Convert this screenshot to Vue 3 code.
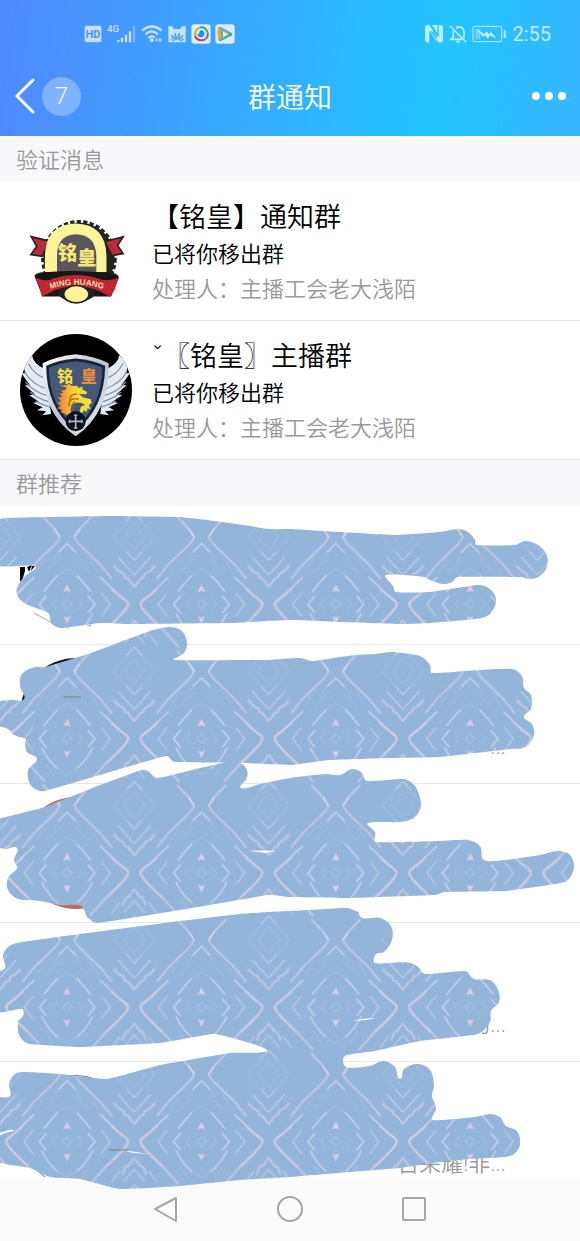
<template>
  <div class="phone">
    <header class="header">
      <div class="status">
        <div class="status_side">
          <svg class="icon_app" viewBox="0 0 60 60">
            <rect x="5" y="5" width="50" height="50" rx="6" fill="#fff" opacity=".7" />
            <text x="30" y="42" text-anchor="middle" class="hd_text">HD</text>
          </svg>
          <svg class="icon_signal" viewBox="0 0 90 60">
            <text x="0" y="24" class="net_text">4G</text>
            <path d="M34 48v7M45 41v14M57 32v23M69 22v33" class="line_bar" />
            <path d="M81 5v50" class="line_bar faint" />
          </svg>
          <svg class="icon_wifi" viewBox="0 0 66 60">
            <path d="M3 20Q32-5 62 20M13 31Q32 14 51 31M22 42Q32 33 42 41" class="line wide" />
            <circle cx="32" cy="49" r="6" class="solid" />
            <path d="M50 41l-8 7 8 7zM54 41l9 7-9 7z" class="solid" />
          </svg>
          <svg class="icon_app" viewBox="0 0 60 60">
            <path d="M4 7h12l5 8h18l5-8h12v48H4z" class="solid" />
            <g fill="#4a9dfd">
              <ellipse cx="26" cy="37" rx="3" ry="11" transform="rotate(-12 26 37)" />
              <ellipse cx="35" cy="37" rx="3" ry="11" transform="rotate(12 35 37)" />
              <ellipse cx="19" cy="41" rx="3" ry="10" transform="rotate(-38 19 41)" />
              <ellipse cx="42" cy="41" rx="3" ry="10" transform="rotate(38 42 41)" />
              <ellipse cx="16" cy="48" rx="2" ry="7" transform="rotate(-65 16 48)" />
              <ellipse cx="45" cy="48" rx="2" ry="7" transform="rotate(65 45 48)" />
            </g>
          </svg>
          <svg class="icon_app" viewBox="0 0 60 60">
            <rect x="1" y="1" width="58" height="58" rx="9" fill="#d8edff" />
            <g fill="none" stroke-width="6">
              <path d="M13 37Q8 17 27 10" stroke="#d5a73a" />
              <path d="M27 10Q44 9 49 24" stroke="#39a968" />
              <path d="M50 25Q52 40 43 45" stroke="#6b74a6" />
              <path d="M12 37Q22 55 43 46" stroke="#d03052" />
            </g>
            <path d="M30 18a11 11 0 1 1-9 18l-3-6 6-1q-1-8 6-11z" fill="#2693da" />
          </svg>
          <svg class="icon_app" viewBox="0 0 60 60">
            <rect x="1" y="1" width="58" height="58" rx="9" fill="#d8edff" />
            <path d="M9 12q2-5 9-2l31 16q7 4 0 9L19 50q-8 4-9-4-3-17-1-34z" fill="#4197e5" />
            <path d="M8 16q2-7 9-3l25 13-22 20q-9 4-11-6z" fill="#e8a260" />
            <path d="M17 14l29 16-28 18z" fill="#67bd62" />
            <path d="M24 22l16 9-16 9z" fill="#e4f4ed" />
          </svg>
        </div>
        <div class="status_side">
          <svg class="icon_app" viewBox="0 0 60 60">
            <path d="M12 3Q3 3 3 13v33q0 10 9 10h4V19l22 34V39L16 3zM48 3q9 0 9 10v33q0 10-9 10h-4L22 24v-4l22 20V3zM24 3h16v25z" class="solid" />
          </svg>
          <svg class="icon_app" viewBox="0 0 60 60">
            <path d="M6 6l48 48M16 20v18l-7 8h34M24 13q20-11 24 10v19M28 5v6M25 53h10" class="line" />
          </svg>
          <svg class="icon_battery" viewBox="0 0 102 60">
            <rect x="3" y="7" width="86" height="46" rx="6" class="line thin" />
            <path d="M10 14h15v32H10z" class="solid faint" />
            <path d="M15 17l23 13 4-8 11 9 3-9 17 20-20-7-5 9-10-10-4 6z" class="solid" />
            <path d="M95 19h6v23h-6z" class="solid" />
          </svg>
          <span class="time">2:55</span>
        </div>
      </div>
      <div class="bar">
        <div class="bar_side">
          <button class="back" aria-label="返回">
            <svg class="icon_back" viewBox="0 0 22 38"><path d="M19 3L3 19l16 16" /></svg>
            <span class="count">7</span>
          </button>
        </div>
        <h1 class="bar_title">群通知</h1>
        <div class="bar_side bar_end">
          <button class="more" aria-label="更多">
            <i class="dot"></i><i class="dot"></i><i class="dot"></i>
          </button>
        </div>
      </div>
    </header>

    <h2 class="section_title">验证消息</h2>
    <ul class="list">
      <li v-for="item in notices" :key="item.name" class="row">
        <svg v-if="item.badge === 'seal'" class="avatar" viewBox="57 40 342 342">
          <ellipse cx="237" cy="234" rx="109" ry="110" fill="#252321" />
          <ellipse cx="237" cy="234" rx="111" ry="113" fill="none" stroke="#252321" stroke-width="9" stroke-dasharray="13 7" />
          <g stroke="#222" stroke-width="5">
            <path d="M91 167l54 13-20 47-35-5 18-25z" fill="#b92b36" />
            <path d="M372 168l-56 14 22 43 34-6-17-25z" fill="#b92b36" />
          </g>
          <path d="M133 275V226Q135 129 227 127q92 2 94 99v49z" fill="#fcf39a" />
          <path d="M170 275v-50q2-64 58-65 59 1 62 65v50z" fill="#59555a" />
          <text x="173" y="240" class="seal_text">铭</text>
          <text x="232" y="254" class="seal_text">皇</text>
          <path d="M101 287q6-14 45-12 82-7 172 3 38-3 41 14l-24 58H126z" fill="#171717" />
          <ellipse cx="230" cy="338" rx="57" ry="28" fill="#222" />
          <path d="M102 291q34 17 56 4 73-22 144 2 28 8 57-5-8 20-12 36l-16 23q-101-67-207 0l-9-35z" fill="#c02632" />
          <ellipse cx="229" cy="343" rx="42" ry="29" fill="#222" />
          <ellipse cx="229" cy="343" rx="36" ry="24" fill="#fcf39a" />
          <path id="seal_arc" d="M137 332Q229 296 324 332" fill="none" />
          <text class="ribbon_text"><textPath href="#seal_arc" startOffset="50%" text-anchor="middle">MING HUANG</textPath></text>
        </svg>
        <svg v-else class="avatar round" viewBox="57 38 342 342">
          <defs>
            <linearGradient id="silver" x2="1" y2="1">
              <stop offset="0" stop-color="#fff" />
              <stop offset=".5" stop-color="#bcc3ce" />
              <stop offset="1" stop-color="#f2f4f7" />
            </linearGradient>
            <linearGradient id="gold" x2="1">
              <stop offset="0" stop-color="#ee773b" />
              <stop offset=".5" stop-color="#f8d52f" />
              <stop offset="1" stop-color="#f3e438" />
            </linearGradient>
          </defs>
          <path d="M57 38h342v342H57z" fill="#000" />
          <g id="wing">
            <path d="M94 103q2 24 38 42l20 137-27 4 12-12-28-3 17-9-29-13 18-4-30-20 18-2-32-29 17 1-29-40 16 4q-17-28 19-56z" fill="#e4eaf1" />
            <path d="M83 129q18 35 53 45M71 154q21 36 67 52M74 184q24 31 69 43M88 215q22 20 58 30M105 243q17 10 44 18" class="feather" />
          </g>
          <use href="#wing" transform="matrix(-1 0 0 1 454 0)" />
          <path d="M227 100q58 6 101 27 3 151-101 223-105-71-101-223 44-21 101-27z" fill="url(#silver)" />
          <path d="M227 113q52 5 90 22-1 130-90 198-90-68-90-198 39-17 90-22z" fill="#16243a" />
          <path d="M227 121q47 4 82 20-3 119-82 180-81-62-82-180 35-16 82-20z" fill="#465877" />
          <text x="171" y="185" class="shield_text">铭</text>
          <text x="243" y="185" class="shield_text orange">皇</text>
          <path d="M181 210q17 2 18-9-14-2-21-7 21 4 28-4 10 10 25 5l5 8 13-5-2 9 15 8-2 7-24-1 15 11 22 5 3 11-9 7 6 13-10-3-3 12-7-7-8 12-6-10 4-12 13-6q-26-14-39 1-16 21 13 30-33 3-38-5l-12-3 7-7-16-5 11-8-11-8 12-6-11-12 14-1-8-11 12-1z" fill="url(#gold)" />
          <path d="M207 260q-4-29 30-23M209 239q3-19 22-17M218 271q-8-15 7-27" class="scale" />
          <circle cx="227" cy="304" r="31" fill="#0c1320" />
          <path d="M227 285v41M207 305h40M222 286h10M222 325h10M208 300v10M246 300v10" class="cross" />
        </svg>
        <div class="info">
          <h3 class="name">{{ item.name }}</h3>
          <p class="result">已将你移出群</p>
          <p class="note">处理人：主播工会老大浅陌</p>
        </div>
      </li>
    </ul>

    <h2 class="section_title">群推荐</h2>
    <section class="recommend">
      <ul class="list recommend_list">
        <li v-for="(item, i) in groups" :key="i" class="row">
          <svg class="avatar" :class="item.tone" viewBox="0 0 112 112">
            <g v-if="item.tone === 'sketch'">
              <path d="M0 48h5v4l-3 10H0zM7 48l5-2-3 7zM12 47h3l-4 5z" fill="#080808" />
              <path d="M14 94l20 11M48 106v4M69 101l2 6-4-1" fill="none" stroke="#aaa" />
            </g>
          </svg>
          <div class="info_end">
            <p class="note">{{ item.note }}</p>
          </div>
        </li>
      </ul>
      <svg class="scribble" viewBox="0 506 580 684" aria-hidden="true">
        <defs>
          <pattern id="weave" width="403" height="403" patternUnits="userSpaceOnUse" patternTransform="translate(0 537) scale(.3333)">
            <path d="M0 0h403v403H0z" fill="#94b5da" />
            <g v-for="flip in flips" :key="flip" :transform="flip">
              <path d="M223-2q3 12 19 28l58 56 36 44M275 341l-36 38-17 26" class="w4" />
              <path d="M240 379l-17 24M300 120l38 36" class="w3" />
              <path d="M334 154q24 23 44 37 10 8 4 18-7 15-62 66" class="w5" />
              <path d="M323 271l-54 60" class="w4" />
              <path d="M201 19l27 27M230 115q20 20 42 49M278 229q-18 38-48 63M264 177l21 25-21 26" class="w3" />
              <path d="M304 168l27 34-27 36" class="w2" />
              <path d="M201 95l30 20M230 292l-29 18M222 62l44 44M268 65l25 38M217 32l27 38M233 184l14 18-14 18M265 277l-24 38M201 187l14 15-14 15-14-15z" class="w1" />
              <path d="M403 331l-62 72M341 0l62 70M403 363l-31 40M372 0l31 40M335 74l68 75M356 60l28 33" class="w1" />
              <path d="M403 331l-24 24M380 44l23 26M354 60l49 54M403 285l-31 36M360 290l-26 33" class="w2" />
              <path d="M341 87l14 15 17 9 3 11 9 2 19 26" class="w4" />
              <path d="M403 250l-17 24-9 3-10 24" class="w4" />
              <path d="M201 142l12 23-12-4zM201 261l11-23-11 4z" fill="#dfcde1" />
            </g>
          </pattern>
        </defs>
        <path v-for="(shape, i) in shapes" :key="i" :d="outline(shape)" fill="url(#weave)" />
        <path d="M249 851q14-1 27 0l-10 2zM352 1021q13-3 24-3l-10 2zM122 1150l28 4-17-1z" fill="#fff" />
        <path d="M63 697h18M109 1150h19" class="trace" />
      </svg>
    </section>

    <nav class="system">
      <button class="system_btn" aria-label="返回">
        <svg viewBox="0 0 30 30"><path d="M25 4v23L4 15z" /></svg>
      </button>
      <button class="system_btn" aria-label="主页">
        <svg viewBox="0 0 30 30"><circle cx="15" cy="15" r="12" /></svg>
      </button>
      <button class="system_btn" aria-label="最近任务">
        <svg viewBox="0 0 30 30"><rect x="4" y="4" width="22" height="22" rx="1" /></svg>
      </button>
    </nav>
  </div>
</template>

<script setup>
const notices = [
  { name: '【铭皇】通知群', badge: 'seal' },
  { name: 'ˇ〖铭皇〗主播群', badge: 'shield' }
]

const groups = [
  { tone: 'sketch', note: '' },
  { tone: 'navy', note: '...' },
  { tone: 'brown', note: '' },
  { tone: 'plain', note: '的...' },
  { tone: 'outlined', note: '吉荣耀!非...' }
]

// the weave is symmetric about the middle of each tile
const flips = ['translate(0 0)', 'matrix(-1 0 0 1 403 0)']

const shapes = [
  [[-4, 522], [8, 518], [50, 517], [110, 516], [180, 517], [215, 521], [250, 526], [270, 529], [290, 529], [340, 532], [395, 535], [440, 532], [458, 529], [468, 532], [475, 540], [476, 545], [515, 545], [525, 541], [538, 545], [547, 556], [546, 569], [538, 577], [530, 579], [520, 577], [458, 577], [452, 582], [443, 584], [430, 580], [424, 577], [386, 575], [393, 586], [396, 592], [430, 592], [478, 585], [490, 589], [496, 600], [490, 614], [475, 619], [430, 623], [400, 624], [340, 622], [290, 620], [230, 623], [130, 624], [100, 623], [62, 628], [52, 624], [48, 613], [28, 605], [18, 597], [17, 588], [24, 577], [35, 566], [-4, 565]],
  [[170, 627], [182, 631], [187, 643], [184, 653], [174, 660], [265, 660], [300, 658], [312, 661], [355, 655], [375, 654], [393, 652], [420, 656], [430, 665], [432, 673], [480, 670], [512, 669], [522, 676], [524, 688], [531, 695], [531, 709], [524, 717], [532, 724], [534, 735], [526, 747], [510, 749], [440, 757], [390, 758], [330, 760], [290, 765], [240, 763], [175, 762], [166, 756], [110, 772], [52, 789], [40, 791], [30, 784], [28, 770], [37, 759], [27, 752], [25, 742], [26, 739], [14, 735], [8, 729], [-4, 724], [-4, 704], [10, 700], [24, 699], [20, 686], [22, 674], [35, 667], [45, 667], [88, 654], [150, 631]],
  [[90, 789], [130, 774], [145, 770], [158, 778], [200, 768], [235, 761], [246, 768], [247, 778], [241, 788], [260, 784], [290, 778], [325, 774], [340, 775], [352, 769], [361, 772], [367, 781], [403, 779], [415, 786], [421, 804], [415, 817], [400, 822], [368, 823], [375, 832], [376, 842], [440, 841], [468, 840], [480, 846], [484, 860], [505, 860], [540, 855], [558, 851], [570, 855], [574, 867], [568, 880], [555, 884], [505, 891], [445, 892], [435, 895], [350, 898], [290, 897], [268, 895], [180, 910], [98, 923], [88, 918], [81, 906], [60, 905], [40, 901], [18, 899], [8, 890], [8, 878], [17, 868], [14, 860], [17, 848], [5, 849], [-4, 845], [-4, 822], [10, 816], [45, 807]],
  [[17, 943], [50, 938], [110, 930], [180, 921], [240, 914], [268, 912], [290, 911], [345, 908], [358, 912], [362, 918], [380, 918], [391, 926], [392, 940], [384, 952], [376, 954], [375, 963], [405, 962], [417, 966], [425, 974], [465, 971], [474, 979], [490, 980], [498, 990], [499, 1002], [491, 1011], [490, 1022], [480, 1033], [465, 1036], [420, 1041], [375, 1051], [345, 1056], [346, 1067], [370, 1066], [383, 1061], [395, 1067], [400, 1079], [404, 1069], [418, 1064], [430, 1070], [434, 1085], [432, 1096], [436, 1108], [433, 1120], [475, 1117], [490, 1114], [500, 1117], [506, 1126], [517, 1131], [520, 1145], [514, 1154], [505, 1157], [470, 1159], [440, 1162], [400, 1168], [350, 1172], [290, 1177], [240, 1180], [180, 1186], [120, 1189], [80, 1179], [50, 1177], [30, 1168], [-4, 1161], [-4, 1139], [3, 1134], [13, 1130], [-4, 1131], [-4, 1099], [10, 1096], [9, 1084], [15, 1074], [25, 1072], [60, 1074], [107, 1079], [160, 1065], [230, 1053], [267, 1050], [215, 1034], [160, 1043], [80, 1047], [30, 1044], [20, 1037], [18, 1022], [23, 1016], [22, 1009], [-4, 1011], [-4, 974], [5, 968], [3, 956], [8, 947]]
]

// closed curve through every point, softened at the joints
function outline(points) {
  const n = points.length
  let d = `M${points[0]}`
  for (let i = 0; i < n; i++) {
    const a = points[(i + n - 1) % n]
    const b = points[i]
    const c = points[(i + 1) % n]
    const e = points[(i + 2) % n]
    const length = Math.hypot(c[0] - b[0], c[1] - b[1])
    const handle = Math.min(length, 16) / 3
    const reach = handle / Math.hypot(c[0] - a[0], c[1] - a[1])
    const back = handle / Math.hypot(e[0] - b[0], e[1] - b[1])
    const p = [b[0] + (c[0] - a[0]) * reach, b[1] + (c[1] - a[1]) * reach]
    const q = [c[0] - (e[0] - b[0]) * back, c[1] - (e[1] - b[1]) * back]
    d += `C${p} ${q} ${c}`
  }
  return d + 'Z'
}
</script>

<style>
body {
  margin: 0;
  background-color: #fff;
}
</style>

<style scoped>
.phone {
  display: flex;
  flex-direction: column;
  height: 100vh;
  font-family: "Roboto", "Noto Sans CJK SC", sans-serif;
  font-weight: 350;
  color: #000;
  background-color: #fff;
}

h1,
h2,
h3,
p,
ul {
  margin: 0;
  padding: 0;
  font-weight: 350;
}

button {
  display: flex;
  align-items: center;
  padding: 0;
  border: 0;
  background: none;
  color: inherit;
  font: inherit;
}

.header {
  flex: none;
  color: #fff;
  background: linear-gradient(98deg, #5088ff 0%, #22c5ff 76%, #38b5ff 100%);
}

.status {
  display: flex;
  justify-content: space-between;
  height: 56px;
  padding: 12px 29px 0 83px;
  box-sizing: border-box;
}

.status_side {
  display: flex;
  align-items: center;
  gap: 4px;
}

.icon_app {
  width: 20px;
  height: 20px;
}

.icon_signal {
  width: 30px;
  height: 20px;
}

.icon_wifi {
  width: 22px;
  height: 20px;
}

.icon_battery {
  width: 34px;
  height: 20px;
}

.time {
  padding-left: 2px;
  font-size: 20px;
  font-weight: 400;
  opacity: .7;
}

.solid {
  fill: #fff;
  opacity: .7;
}

.line {
  fill: none;
  stroke: #fff;
  stroke-width: 5;
  opacity: .7;
}

.line.wide {
  stroke-width: 7;
}

.line.thin {
  stroke-width: 3;
}

.line_bar {
  stroke: #fff;
  stroke-width: 7;
  opacity: .7;
}

.faint {
  opacity: .3;
}

.hd_text {
  font-size: 32px;
  font-weight: 700;
  fill: #4a91ff;
}

.net_text {
  font-size: 29px;
  font-weight: 500;
  fill: #fff;
  opacity: .7;
}

.bar {
  display: flex;
  align-items: center;
  height: 80px;
  padding: 0 14px;
}

.bar_side {
  display: flex;
  flex: 1;
}

.bar_end {
  justify-content: flex-end;
}

.bar_title {
  font-size: 28px;
}

.back {
  gap: 6px;
}

.icon_back {
  width: 22px;
  height: 38px;
  fill: none;
  stroke: #fff;
  stroke-width: 3;
  stroke-linecap: round;
}

.count {
  width: 39px;
  height: 39px;
  border-radius: 50%;
  background-color: rgba(255, 255, 255, .3);
  font-size: 24px;
  line-height: 39px;
  text-align: center;
}

.more {
  gap: 5px;
}

.dot {
  width: 8px;
  height: 8px;
  border-radius: 50%;
  background-color: #fff;
}

.section_title {
  flex: none;
  padding: 4px 16px 0;
  background-color: #f8f8fb;
  color: #999;
  font-size: 22px;
  line-height: 42px;
}

.list {
  list-style: none;
}

.row {
  display: flex;
  align-items: center;
  gap: 20px;
  height: 138px;
  padding: 0 20px;
  border-bottom: 1px solid #e6e6e8;
}

.avatar {
  flex: none;
  width: 112px;
  height: 112px;
}

.round {
  border-radius: 50%;
}

.navy {
  border-radius: 50%;
  background-color: #101a2c;
}

.brown {
  border-radius: 50%;
  background-color: #b9705f;
}

.outlined {
  box-sizing: border-box;
  border: 1px solid #687b7b;
  border-radius: 50%;
}

.info {
  flex: 1;
  padding-top: 4px;
}

.name {
  font-size: 27px;
  line-height: 38px;
}

.result {
  font-size: 22px;
  line-height: 35px;
}

.note {
  color: #999;
  font-size: 22px;
  line-height: 35px;
}

.info_end {
  flex: 1;
  align-self: flex-end;
  padding: 0 54px 24px 0;
  text-align: right;
}

.info_end .note {
  line-height: 24px;
}

.recommend {
  position: relative;
  flex: 1;
  min-height: 0;
}

.recommend_list {
  height: 100%;
  overflow: hidden;
}

.scribble {
  position: absolute;
  top: 0;
  left: 0;
  z-index: 1;
  width: 100%;
}

.w1,
.w2,
.w3,
.w4,
.w5 {
  fill: none;
  stroke: #c8cde3;
  stroke-width: 2;
  opacity: .5;
}

.w2 {
  stroke: #d8d8e8;
  stroke-width: 3;
  opacity: .7;
}

.w3 {
  stroke: #dadbea;
  stroke-width: 4;
  opacity: .8;
}

.w4 {
  stroke: #cbcbe0;
  stroke-width: 6;
  opacity: .8;
}

.w5 {
  stroke: #d6cee1;
  stroke-width: 7;
  opacity: .85;
}

.trace {
  stroke: #77827b;
}

.seal_text {
  font-size: 58px;
  font-weight: 900;
  fill: #f4e87b;
}

.ribbon_text {
  font-family: "Liberation Sans", sans-serif;
  font-size: 25px;
  font-weight: 700;
  fill: #f3dfb1;
}

.shield_text {
  font-size: 48px;
  font-weight: 900;
  fill: #f0db41;
}

.shield_text.orange {
  fill: #e58e42;
}

.feather {
  fill: none;
  stroke: #8495aa;
  stroke-width: 4;
}

.scale {
  fill: none;
  stroke: #ad582e;
  stroke-width: 4;
}

.cross {
  fill: none;
  stroke: #aeb8c7;
  stroke-width: 5;
}

.system {
  display: flex;
  flex: none;
  align-items: center;
  justify-content: center;
  gap: 94px;
  height: 64px;
  background-color: #fbfbfb;
}

.system_btn {
  width: 30px;
  height: 30px;
}

.system_btn svg {
  width: 30px;
  height: 30px;
  fill: none;
  stroke: #a5a5a5;
  stroke-width: 2;
  stroke-linejoin: round;
}
</style>
